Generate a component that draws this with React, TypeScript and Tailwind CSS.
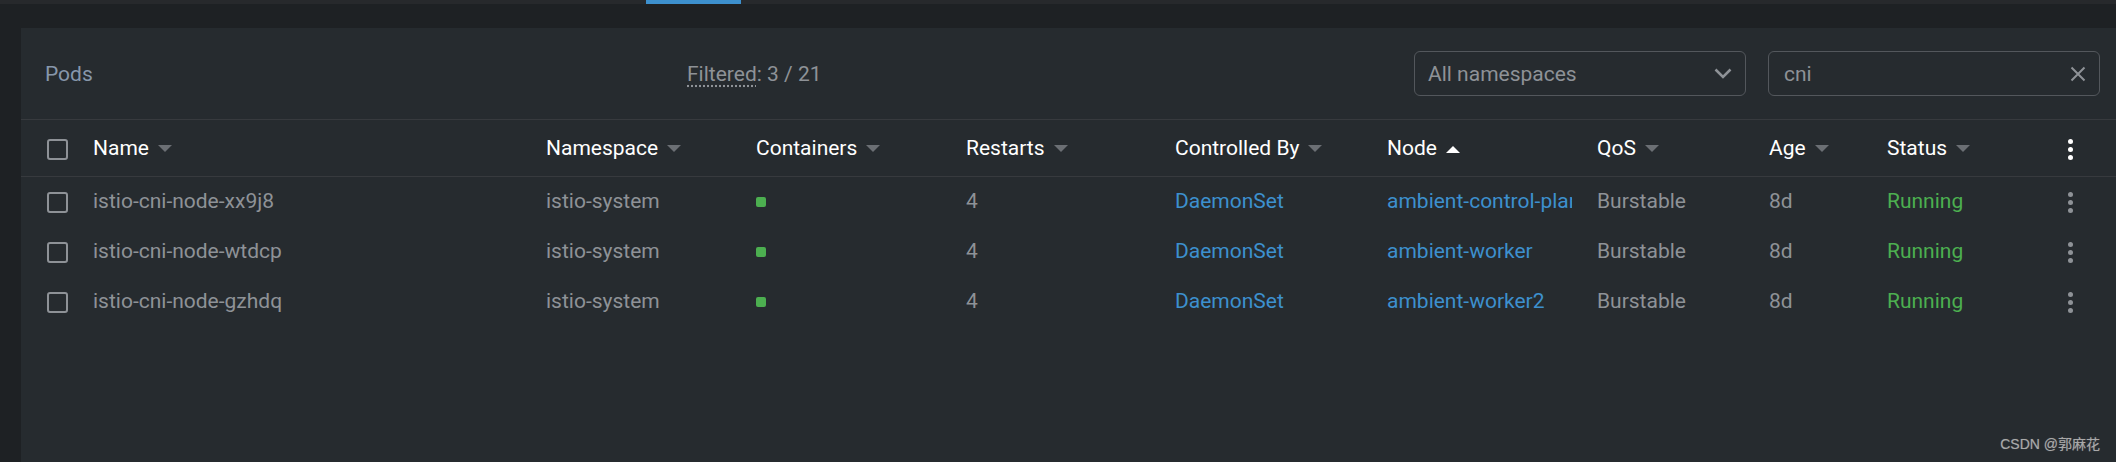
import { ReactNode } from "react";

type Pod = {
  name: string;
  namespace: string;
  restarts: number;
  controlledBy: string;
  node: string;
  qos: string;
  age: string;
  status: string;
};

const pods: Pod[] = [
  { name: "istio-cni-node-xx9j8", namespace: "istio-system", restarts: 4, controlledBy: "DaemonSet", node: "ambient-control-plane", qos: "Burstable", age: "8d", status: "Running" },
  { name: "istio-cni-node-wtdcp", namespace: "istio-system", restarts: 4, controlledBy: "DaemonSet", node: "ambient-worker", qos: "Burstable", age: "8d", status: "Running" },
  { name: "istio-cni-node-gzhdq", namespace: "istio-system", restarts: 4, controlledBy: "DaemonSet", node: "ambient-worker2", qos: "Burstable", age: "8d", status: "Running" },
];

// column widths (px) measured from the screenshot
const cols = {
  check: "w-[46px]",
  name: "w-[453px]",
  namespace: "w-[210px]",
  containers: "w-[210px]",
  restarts: "w-[209px]",
  controlled: "w-[212px]",
  node: "w-[210px] pr-[25px]",
  qos: "w-[172px]",
  age: "w-[118px]",
  status: "w-[180px]",
};

function Checkbox() {
  return <div className="w-[21px] h-[21px] rounded-[3px] border-[2.5px] border-[#8e9297]" />;
}

function SortArrow({ up, active }: { up?: boolean; active?: boolean }) {
  return (
    <svg width="14" height="8" viewBox="0 0 14 8" className="ml-[9px] shrink-0">
      <path d={up ? "M0 8h14L7 1z" : "M0 0h14L7 7z"} fill={active ? "#ffffff" : "#6b6f74"} />
    </svg>
  );
}

function Kebab({ light }: { light?: boolean }) {
  const dot = light ? "bg-white" : "bg-[#8e9297]";
  return (
    <div className="w-[6px] flex flex-col items-center gap-[3px]">
      <span className={`w-[5px] h-[5px] rounded-full ${dot}`} />
      <span className={`w-[5px] h-[5px] rounded-full ${dot}`} />
      <span className={`w-[5px] h-[5px] rounded-full ${dot}`} />
    </div>
  );
}

function HeadCell({ className, children, up, active }: { className: string; children: ReactNode; up?: boolean; active?: boolean }) {
  return (
    <div className={`${className} shrink-0 flex items-center`}>
      <span>{children}</span>
      <SortArrow up={up} active={active} />
    </div>
  );
}

function Cell({ className, children }: { className: string; children: ReactNode }) {
  return (
    <div className={`${className} shrink-0`}>
      <div className="overflow-hidden whitespace-nowrap">{children}</div>
    </div>
  );
}

export default function App() {
  return (
    <div className="relative w-[2116px] h-[462px] overflow-hidden bg-[#1e2124] font-['Roboto','Noto_Sans',sans-serif] text-[21px]">
      {/* tabs strip */}
      <div className="h-[4px] bg-[#27292c] flex">
        <div className="ml-[646px] w-[95px] bg-[#3d90ce]" />
      </div>

      <div className="pt-[24px] pl-[21px]">
        <div className="h-[434px] bg-[#262b2f]">
          {/* toolbar */}
          <div className="h-[92px] flex items-center border-b border-[#373a3e] pl-[24px] pr-[16px]">
            <div className="w-[642px] pt-[2px] text-[#8797ab]">Pods</div>
            <div className="pt-[2px] text-[#8e9297]">
              <span className="underline decoration-dotted decoration-[#8e9297] underline-offset-[5px]">Filtered</span>: 3 / 21
            </div>
            <div className="flex-1" />
            <div className="w-[332px] h-[45px] rounded-[6px] border border-[#53575c] flex items-center pl-[13px] pr-[13px] text-[#8e9297]">
              <span className="flex-1 pt-[2px]">All namespaces</span>
              <svg width="18" height="11" viewBox="0 0 18 11">
                <path d="M1.5 1.5L9 9l7.5-7.5" fill="none" stroke="#8e9297" strokeWidth="2.5" />
              </svg>
            </div>
            <div className="ml-[22px] w-[332px] h-[45px] rounded-[6px] border border-[#53575c] flex items-center pl-[15px] pr-[13px] text-[#8e9297]">
              <span className="flex-1 pt-[2px]">cni</span>
              <svg width="16" height="16" viewBox="0 0 16 16">
                <path d="M1.5 1.5l13 13M14.5 1.5l-13 13" stroke="#8e9297" strokeWidth="2" />
              </svg>
            </div>
          </div>

          {/* table header */}
          <div className="h-[57px] pt-[2px] flex items-center border-b border-[#373a3e] pl-[26px] text-white">
            <div className={`${cols.check} shrink-0`}>
              <Checkbox />
            </div>
            <HeadCell className={cols.name}>Name</HeadCell>
            <HeadCell className={cols.namespace}>Namespace</HeadCell>
            <HeadCell className={cols.containers}>Containers</HeadCell>
            <HeadCell className={cols.restarts}>Restarts</HeadCell>
            <HeadCell className={cols.controlled}>Controlled By</HeadCell>
            <HeadCell className={cols.node} up active>Node</HeadCell>
            <HeadCell className={cols.qos}>QoS</HeadCell>
            <HeadCell className={cols.age}>Age</HeadCell>
            <HeadCell className={cols.status}>Status</HeadCell>
            <Kebab light />
          </div>

          {/* rows */}
          {pods.map((p) => (
            <div key={p.name} className="h-[50px] flex items-center pl-[26px] text-[#8e9297]">
              <div className={`${cols.check} shrink-0`}>
                <Checkbox />
              </div>
              <Cell className={cols.name}>{p.name}</Cell>
              <Cell className={cols.namespace}>{p.namespace}</Cell>
              <div className={`${cols.containers} shrink-0`}>
                <div className="w-[10px] h-[10px] rounded-[2px] bg-[#4caf50]" />
              </div>
              <Cell className={cols.restarts}>{p.restarts}</Cell>
              <Cell className={cols.controlled}>
                <span className="text-[#3d90ce]">{p.controlledBy}</span>
              </Cell>
              <Cell className={cols.node}>
                <span className="text-[#3d90ce]">{p.node}</span>
              </Cell>
              <Cell className={cols.qos}>{p.qos}</Cell>
              <Cell className={cols.age}>{p.age}</Cell>
              <Cell className={cols.status}>
                <span className="text-[#4caf50]">{p.status}</span>
              </Cell>
              <Kebab />
            </div>
          ))}
        </div>
      </div>

      {/* watermark */}
      <div className="absolute right-[16px] top-[434px] text-[14px] text-[#a9a9a9] font-['Liberation_Sans','Noto_Sans_CJK_SC',sans-serif] [text-shadow:0_0_1px_rgba(255,255,255,0.3)]">
        CSDN @郭麻花
      </div>
    </div>
  );
}
